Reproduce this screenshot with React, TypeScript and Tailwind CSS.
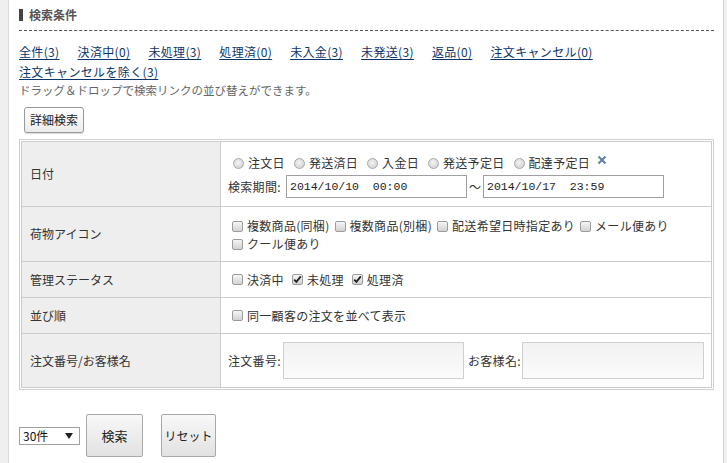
import React from "react";

const Radio = () => (
  <span className="inline-block w-[11px] h-[11px] shrink-0 rounded-full border border-[#a9a9a9] bg-[radial-gradient(circle_at_45%_40%,#f4f4f4_0%,#d6d6d6_70%,#c4c4c4_100%)]" />
);

const Box = ({ checked = false }: { checked?: boolean }) => (
  <span className="inline-flex w-[11px] h-[11px] shrink-0 items-center justify-center rounded-[2px] border border-[#9c9c9c] bg-linear-to-b from-[#f6f6f6] to-[#d2d2d2]">
    {checked && (
      <svg width="9" height="9" viewBox="0 0 9 9">
        <path d="M1.2 4.6 L3.4 6.9 L7.8 1.4" fill="none" stroke="#222" strokeWidth="1.8" />
      </svg>
    )}
  </span>
);

const RadioItem = ({ label, first = false }: { label: string; first?: boolean }) => (
  <span className={`inline-flex items-center gap-[4px] ${first ? "ml-[5px]" : "ml-[9px]"}`}>
    <Radio />
    <span className="tracking-[0.3px]">{label}</span>
  </span>
);

const CheckItem = ({ label, checked = false }: { label: string; checked?: boolean }) => (
  <span className="inline-flex items-center gap-[4px] h-[18px]">
    <Box checked={checked} />
    <span className="tracking-[0.3px]">{label}</span>
  </span>
);

const links = [
  "全件(3)",
  "決済中(0)",
  "未処理(3)",
  "処理済(0)",
  "未入金(3)",
  "未発送(3)",
  "返品(0)",
  "注文キャンセル(0)",
  "注文キャンセルを除く(3)",
];

export default function App() {
  return (
    <div className="w-[727px] h-[463px] flex overflow-hidden text-[12px] text-[#333] font-['Noto_Sans_CJK_JP','Noto_Sans',sans-serif]">
      <div className="w-[9px] shrink-0 bg-[#efefef] border-r border-[#dadada]" />
      <div className="flex-1 bg-white pl-[10px] pr-[9px] pt-[7px]">
        {/* title */}
        <div className="flex items-center h-[16px]">
          <span className="w-[4px] h-[12px] bg-[#444]" />
          <span className="ml-[6px] font-bold text-[#555] leading-[16px]">検索条件</span>
        </div>
        <div className="mt-[7px] border-b border-dashed border-[#555]" />

        {/* links */}
        <div className="mt-[11px] flex flex-wrap gap-x-[18px] leading-[20px] w-[620px]">
          {links.map((l) => (
            <a key={l} href="#" className="text-[#0d3668] underline underline-offset-2 tracking-[0.35px]">
              {l}
            </a>
          ))}
        </div>
        <div className="leading-[16px] text-[#666] text-[11.5px]">ドラッグ＆ドロップで検索リンクの並び替えができます。</div>

        <button className="mt-[9px] ml-[5px] h-[26px] w-[60px] rounded-[3px] border border-[#999] bg-linear-to-b from-white to-[#ececec] text-[12px] text-[#222] shadow-[0_1px_1px_rgba(0,0,0,0.15)]">
          詳細検索
        </button>

        {/* table */}
        <div className="mt-[6px] w-[695px] border border-[#d0d0d0] p-[1px]">
          <div className="grid grid-cols-[199px_491px] border-t border-l border-[#cccccc]">
            {/* 日付 */}
            <div className="h-[65px] bg-[#eeeeee] border-r border-b border-[#cccccc] flex items-center pl-[8px]">日付</div>
            <div className="h-[65px] border-r border-b border-[#cccccc] pl-[7px] pt-[11px]">
              <div className="flex items-center h-[20px]">
                <RadioItem label="注文日" first />
                <RadioItem label="発送済日" />
                <RadioItem label="入金日" />
                <RadioItem label="発送予定日" />
                <RadioItem label="配達予定日" />
                <svg className="ml-[7px] -mt-[6px]" width="10" height="10" viewBox="0 0 10 10">
                  <path d="M1.5 1.5 L8.5 8.5 M8.5 1.5 L1.5 8.5" stroke="#5b7ea6" strokeWidth="2" />
                </svg>
              </div>
              <div className="mt-[2px] flex items-center h-[23px]">
                <span className="w-[58px] shrink-0 tracking-[0.3px]">検索期間:</span>
                <span className="w-[181px] h-[23px] border border-[#a0a0a0] bg-white flex items-center pl-[3px] font-['Liberation_Mono',monospace] text-[11.5px] text-[#222] whitespace-pre">
                  2014/10/10  00:00
                </span>
                <span className="ml-[2px] w-[14px]">～</span>
                <span className="w-[181px] h-[23px] border border-[#a0a0a0] bg-white flex items-center pl-[3px] font-['Liberation_Mono',monospace] text-[11.5px] text-[#222] whitespace-pre">
                  2014/10/17  23:59
                </span>
              </div>
            </div>

            {/* 荷物アイコン */}
            <div className="h-[55px] bg-[#eeeeee] border-r border-b border-[#cccccc] flex items-center pl-[8px]">荷物アイコン</div>
            <div className="h-[55px] border-r border-b border-[#cccccc] pl-[11px] pr-[4px] pt-[10px]">
              <div className="flex flex-wrap gap-x-[5px]">
                <CheckItem label="複数商品(同梱)" />
                <CheckItem label="複数商品(別梱)" />
                <CheckItem label="配送希望日時指定あり" />
                <CheckItem label="メール便あり" />
                <CheckItem label="クール便あり" />
              </div>
            </div>

            {/* 管理ステータス */}
            <div className="h-[36px] bg-[#eeeeee] border-r border-b border-[#cccccc] flex items-center pl-[8px]">管理ステータス</div>
            <div className="h-[36px] border-r border-b border-[#cccccc] pl-[11px] flex items-center gap-x-[8px]">
              <CheckItem label="決済中" />
              <CheckItem label="未処理" checked />
              <CheckItem label="処理済" checked />
            </div>

            {/* 並び順 */}
            <div className="h-[36px] bg-[#eeeeee] border-r border-b border-[#cccccc] flex items-center pl-[8px]">並び順</div>
            <div className="h-[36px] border-r border-b border-[#cccccc] pl-[11px] flex items-center">
              <CheckItem label="同一顧客の注文を並べて表示" />
            </div>

            {/* 注文番号/お客様名 */}
            <div className="h-[54px] bg-[#eeeeee] border-r border-b border-[#cccccc] flex items-center pl-[8px]">注文番号/お客様名</div>
            <div className="h-[54px] border-r border-b border-[#cccccc] pl-[7px] flex items-center">
              <span className="w-[55px] tracking-[0.3px]">注文番号:</span>
              <span className="w-[181px] h-[37px] border border-[#cfcfcf] bg-linear-to-b from-[#f2f2f2] to-[#fbfbfb]" />
              <span className="ml-[4px] w-[54px] tracking-[0.3px]">お客様名:</span>
              <span className="w-[182px] h-[37px] border border-[#cfcfcf] bg-linear-to-b from-[#f2f2f2] to-[#fbfbfb]" />
            </div>
          </div>
        </div>

        {/* bottom controls */}
        <div className="mt-[24px] flex items-center">
          <div className="w-[61px] h-[18px] border border-[#a0a0a0] bg-white flex items-center justify-between pl-[3px] pr-[6px] text-[#111]">
            <span>30件</span>
            <svg width="8" height="6" viewBox="0 0 8 6">
              <path d="M0 0 L8 0 L4 6 Z" fill="#222" />
            </svg>
          </div>
          <button className="ml-[6px] w-[57px] h-[43px] rounded-[2px] border border-[#a8a8a8] bg-linear-to-b from-[#f8f8f8] to-[#e2e2e2] text-[13px] text-[#222]">
            検索
          </button>
          <button className="ml-[18px] w-[55px] h-[43px] rounded-[2px] border border-[#a8a8a8] bg-linear-to-b from-[#f8f8f8] to-[#e2e2e2] text-[12px] text-[#222]">
            リセット
          </button>
        </div>
      </div>
      <div className="w-[4px] shrink-0 bg-[#efefef] border-l border-[#d5d5d5]" />
    </div>
  );
}
